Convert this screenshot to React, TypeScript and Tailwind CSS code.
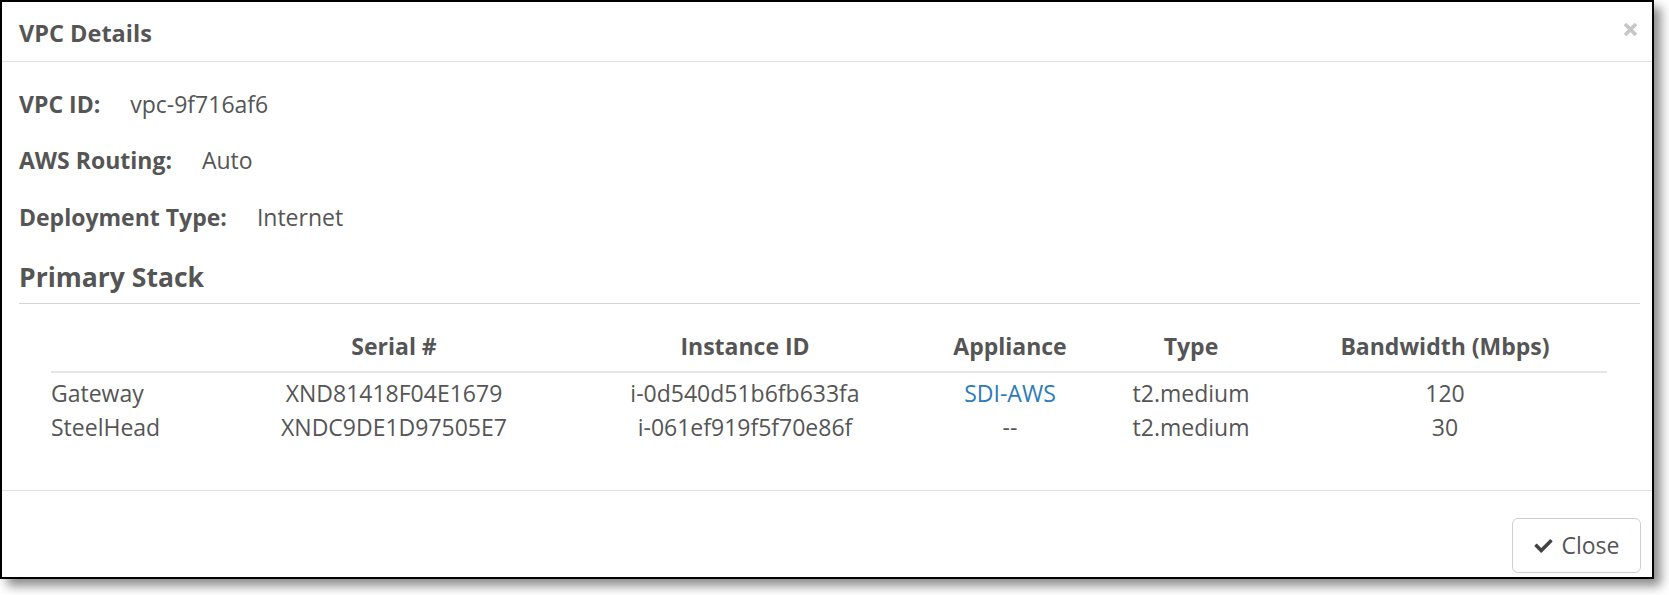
import React from 'react';
import { FaCheck } from 'react-icons/fa';

const details = [
  { label: 'VPC ID:', value: 'vpc-9f716af6', mt: 'mt-[27px]' },
  { label: 'AWS Routing:', value: 'Auto', mt: 'mt-[26px]' },
  { label: 'Deployment Type:', value: 'Internet', mt: 'mt-[27px]' },
];

const headers = ['', 'Serial #', 'Instance ID', 'Appliance', 'Type', 'Bandwidth (Mbps)'];

const rows = [
  { name: 'Gateway', serial: 'XND81418F04E1679', instance: 'i-0d540d51b6fb633fa', appliance: 'SDI-AWS', type: 't2.medium', bw: '120' },
  { name: 'SteelHead', serial: 'XNDC9DE1D97505E7', instance: 'i-061ef919f5f70e86f', appliance: '--', type: 't2.medium', bw: '30' },
];

const cols = 'grid grid-cols-[177px_332px_370px_160px_202px_306px]';

const App: React.FC = () => {
  return (
    <div className="w-[1669px] h-[595px] bg-white font-['Open_Sans',sans-serif] text-[#555]">
      <div className="w-[1654px] h-[579px] border-2 border-black bg-white shadow-[7px_7px_10px_rgba(0,0,0,0.45)] flex flex-col">
        {/* header */}
        <div className="flex items-start justify-between border-b border-[#e2e2e2] pl-[17px] pr-[14px] pt-[16px] h-[60px]">
          <h4 className="text-[23.5px] leading-[30px] font-bold">VPC Details</h4>
          <button className="mt-[4px] text-[#c6c6c6]" aria-label="close">
            <svg width="15" height="15" viewBox="0 0 15 15">
              <path d="M2 2 L13 13 M13 2 L2 13" stroke="currentColor" strokeWidth="3.6" strokeLinecap="butt" />
            </svg>
          </button>
        </div>

        {/* body */}
        <div className="pl-[17px] pr-[12px] pb-[46px]">
          {details.map((d) => (
            <div key={d.label} className={`flex gap-[30px] text-[23px] leading-[30px] ${d.mt}`}>
              <span className="font-bold">{d.label}</span>
              <span>{d.value}</span>
            </div>
          ))}

          <h3 className="mt-[27px] text-[26.5px] leading-[36px] font-bold pb-[8px] border-b border-[#d4d4d4]">
            Primary Stack
          </h3>

          <div className="mt-[29px] ml-[32px] w-[1556px] text-[23px]">
            <div className={`${cols} font-bold leading-[26px] pb-[12px] border-b-2 border-[#e6e6e6]`}>
              {headers.map((h, i) => (
                <div key={i} className={i === 0 ? 'text-left' : 'text-center'}>{h}</div>
              ))}
            </div>
            <div className="pt-[3px]">
              {rows.map((r) => (
                <div key={r.name} className={`${cols} leading-[34px] h-[34px]`}>
                  <div>{r.name}</div>
                  <div className="text-center">{r.serial}</div>
                  <div className="text-center">{r.instance}</div>
                  <div className={`text-center ${r.appliance === '--' ? '' : 'text-[#2d7bb9]'}`}>{r.appliance}</div>
                  <div className="text-center">{r.type}</div>
                  <div className="text-center">{r.bw}</div>
                </div>
              ))}
            </div>
          </div>
        </div>

        {/* footer */}
        <div className="flex-1 border-t border-[#e2e2e2] flex justify-end items-start pt-[27px] pr-[11px]">
          <button className="w-[129px] h-[55px] rounded-[6px] border border-[#cfcfcf] bg-white flex items-center justify-center gap-[7px] text-[23px]">
            <FaCheck className="w-[21px] h-[18px] text-[#444]" />
            <span>Close</span>
          </button>
        </div>
      </div>
    </div>
  );
};

export default App;
